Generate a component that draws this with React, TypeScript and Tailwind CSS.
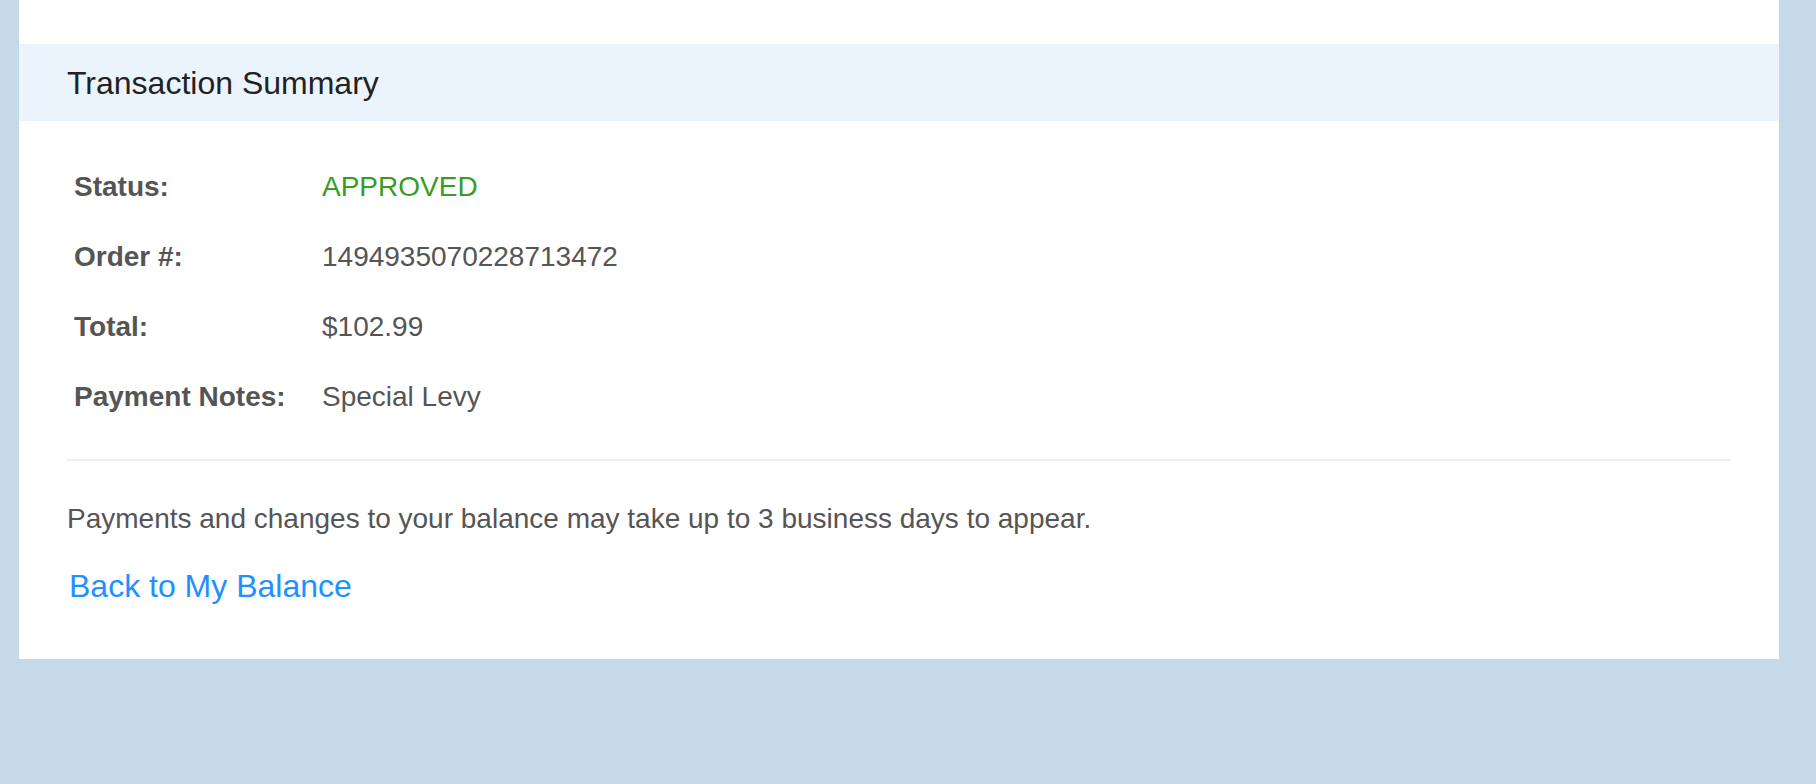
const rows: { label: string; value: string; tone?: 'ok' }[] = [
  { label: 'Status:', value: 'APPROVED', tone: 'ok' },
  { label: 'Order #:', value: '1494935070228713472' },
  { label: 'Total:', value: '$102.99' },
  { label: 'Payment Notes:', value: 'Special Levy' },
]

export default function App() {
  return (
    <div
      className="min-h-[784px] bg-[#c6d9e8] pl-[19px] pr-[37px]"
      style={{ fontFamily: '"Liberation Sans", Arial, Helvetica, sans-serif' }}
    >
      <div className="bg-white pt-[44px] pb-[51px]">
        <div className="flex h-[77px] items-center bg-[#ebf4fc] px-[48px]">
          <h2 className="text-[32px] leading-none text-[#222]">Transaction Summary</h2>
        </div>

        <div className="px-[48px]">
          <table className="mt-[31px] border-collapse text-[28px] text-[#555]">
            <tbody>
              {rows.map((r) => (
                <tr key={r.label} className="h-[70px]">
                  <td className="w-[255px] pl-[7px] align-middle font-bold">{r.label}</td>
                  <td className={r.tone === 'ok' ? 'align-middle text-[#3a9d23]' : 'align-middle'}>
                    {r.value}
                  </td>
                </tr>
              ))}
            </tbody>
          </table>

          <div className="mt-[27px] h-[2px] bg-[#eeeeee]" />

          <p className="mt-[38px] text-[28px] leading-[40px] text-[#555]">
            Payments and changes to your balance may take up to 3 business days to appear.
          </p>

          <a href="#" className="mt-[25px] block pl-[2px] text-[32px] leading-[44px] text-[#1e90ff]">
            Back to My Balance
          </a>
        </div>
      </div>
    </div>
  )
}
